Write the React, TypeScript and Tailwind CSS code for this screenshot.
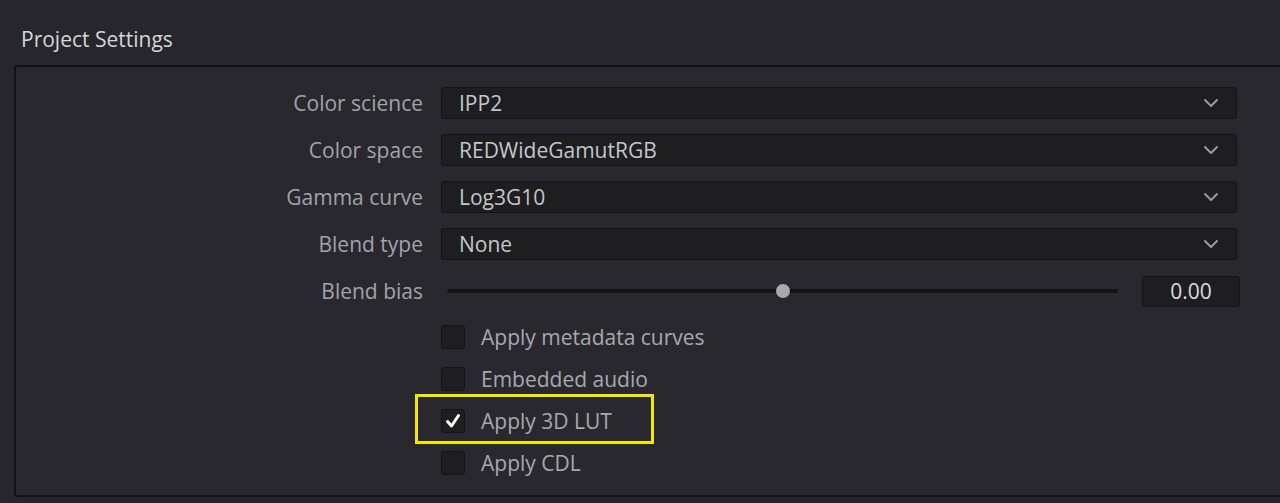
import React from "react";

const Chevron = () => (
  <svg width="16" height="10" viewBox="0 0 16 10" fill="none">
    <path d="M2 2 L8 8 L14 2" stroke="#9a9a9c" strokeWidth="2" strokeLinecap="round" strokeLinejoin="round" />
  </svg>
);

const Dropdown = ({ value }: { value: string }) => (
  <div className="flex h-[32px] w-[796px] items-center justify-between rounded-[3px] border border-[#141416] bg-[#1e1e21] pl-[17px] pr-[17px]">
    <span className="text-[#c4c6c8]">{value}</span>
    <Chevron />
  </div>
);

const Row = ({ label, children }: { label: string; children: React.ReactNode }) => (
  <div className="flex h-[32px] items-center">
    <div className="w-[407px] pr-0 text-right text-[#a0a4a8]">{label}</div>
    <div className="ml-[18px] flex items-center">{children}</div>
  </div>
);

const Check = ({ label, checked, highlight }: { label: string; checked?: boolean; highlight?: boolean }) => (
  <div className="relative flex h-[42px] items-center">
    {highlight && (
      <div className="pointer-events-none absolute left-[-26px] top-[-6px] h-[50px] w-[239px] border-[3px] border-[#f2e800]" />
    )}
    <div className="flex h-[24px] w-[24px] items-center justify-center rounded-[3px] border border-[#141416] bg-[#1e1e21]">
      {checked && (
        <svg width="18" height="18" viewBox="0 0 18 18" fill="none">
          <path d="M3.5 9.5 L7.5 14 L14.5 3.5" stroke="#ffffff" strokeWidth="3" strokeLinecap="round" strokeLinejoin="round" />
        </svg>
      )}
    </div>
    <span className="ml-[16px] text-[#a6a9ad]">{label}</span>
  </div>
);

export default function App() {
  return (
    <div className="h-[503px] w-full overflow-hidden bg-[#27262c] font-['Open_Sans',sans-serif] text-[21px] leading-[28px]">
      <div className="pl-[21px] pt-[25px] text-[#d4d6d8]">Project Settings</div>
      <div className="ml-[14px] mt-[12px] h-[432px] w-[1300px] rounded-tl-[3px] rounded-bl-[3px] border-b-2 border-l-2 border-t-2 border-[#121215] bg-[#29282f] pt-[20px]">
        <div className="flex flex-col gap-[15px]">
          <Row label="Color science">
            <Dropdown value="IPP2" />
          </Row>
          <Row label="Color space">
            <Dropdown value="REDWideGamutRGB" />
          </Row>
          <Row label="Gamma curve">
            <Dropdown value="Log3G10" />
          </Row>
          <Row label="Blend type">
            <Dropdown value="None" />
          </Row>
          <Row label="Blend bias">
            <div className="flex items-center">
              <div className="relative ml-[6px] h-[4px] w-[671px] rounded-full bg-[#151517]">
                <div className="absolute left-[329px] top-[-5px] h-[14px] w-[14px] rounded-full bg-[#a9a9ab]" />
              </div>
              <div className="ml-[24px] flex h-[31px] w-[98px] items-center justify-center rounded-[3px] border border-[#141416] bg-[#1e1e21] text-[#dcdde0]">
                0.00
              </div>
            </div>
          </Row>
        </div>
        <div className="ml-[425px] mt-[9px] flex flex-col">
          <Check label="Apply metadata curves" />
          <Check label="Embedded audio" />
          <Check label="Apply 3D LUT" checked highlight />
          <Check label="Apply CDL" />
        </div>
      </div>
    </div>
  );
}
